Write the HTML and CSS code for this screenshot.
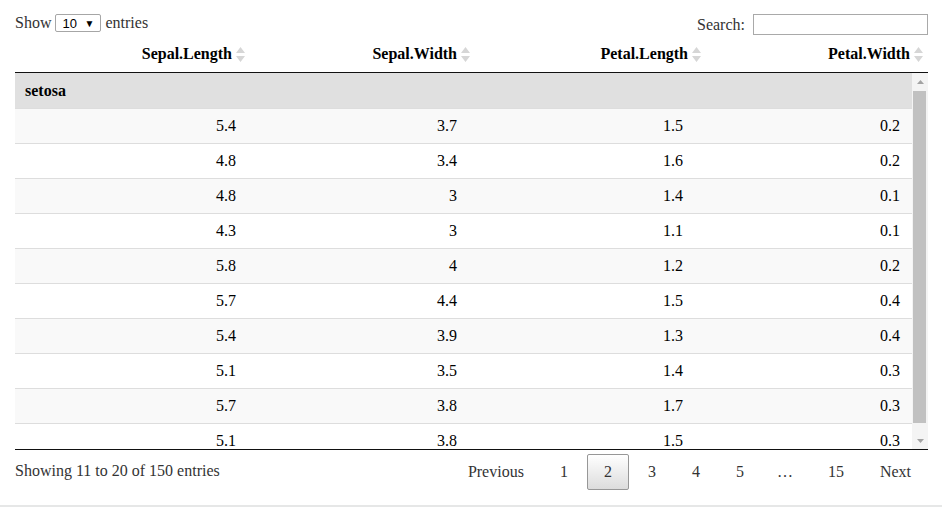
FILE: index.html
```html
<!DOCTYPE html>
<html>
<head>
<meta charset="utf-8">
<title>iris table</title>
<link rel="stylesheet" href="styles.css">
</head>
<body>
<div class="page">
  <div class="wrapper">
    <div class="top">
      <div class="length">Show <span class="select"><span class="select-val">10</span><span class="select-arrow">&#9660;</span></span> entries</div>
      <label class="filter">Search:<input class="search-input" type="search"></label>
    </div>
    <div class="scroll-head">
      <table class="head-table">
        <colgroup><col class="hc1"><col class="hc2"><col class="hc3"><col class="hc4"></colgroup>
        <thead>
          <tr>
            <th>Sepal.Length<svg class="sort" viewBox="0 0 9 15" width="9" height="15"><path d="M4.5 0 L9 6 L0 6 Z M0 9 L9 9 L4.5 15 Z"/></svg></th>
            <th>Sepal.Width<svg class="sort" viewBox="0 0 9 15" width="9" height="15"><path d="M4.5 0 L9 6 L0 6 Z M0 9 L9 9 L4.5 15 Z"/></svg></th>
            <th>Petal.Length<svg class="sort" viewBox="0 0 9 15" width="9" height="15"><path d="M4.5 0 L9 6 L0 6 Z M0 9 L9 9 L4.5 15 Z"/></svg></th>
            <th>Petal.Width<svg class="sort" viewBox="0 0 9 15" width="9" height="15"><path d="M4.5 0 L9 6 L0 6 Z M0 9 L9 9 L4.5 15 Z"/></svg></th>
          </tr>
        </thead>
      </table>
    </div>
    <div class="scroll-body">
      <div class="body-clip">
        <table class="body-table">
          <colgroup><col class="bc1"><col class="bc2"><col class="bc3"><col class="bc4"></colgroup>
          <tbody>
            <tr class="group"><td colspan="4">setosa</td></tr>
            <tr class="odd"><td>5.4</td><td>3.7</td><td>1.5</td><td>0.2</td></tr>
            <tr class="even"><td>4.8</td><td>3.4</td><td>1.6</td><td>0.2</td></tr>
            <tr class="odd"><td>4.8</td><td>3</td><td>1.4</td><td>0.1</td></tr>
            <tr class="even"><td>4.3</td><td>3</td><td>1.1</td><td>0.1</td></tr>
            <tr class="odd"><td>5.8</td><td>4</td><td>1.2</td><td>0.2</td></tr>
            <tr class="even"><td>5.7</td><td>4.4</td><td>1.5</td><td>0.4</td></tr>
            <tr class="odd"><td>5.4</td><td>3.9</td><td>1.3</td><td>0.4</td></tr>
            <tr class="even"><td>5.1</td><td>3.5</td><td>1.4</td><td>0.3</td></tr>
            <tr class="odd"><td>5.7</td><td>3.8</td><td>1.7</td><td>0.3</td></tr>
            <tr class="even"><td>5.1</td><td>3.8</td><td>1.5</td><td>0.3</td></tr>
          </tbody>
        </table>
      </div>
      <div class="scrollbar">
        <div class="sb-btn"><svg width="7" height="4" viewBox="0 0 7 4"><path d="M3.5 0 L7 4 L0 4 Z"/></svg></div>
        <div class="sb-track"><div class="sb-thumb"></div></div>
        <div class="sb-btn"><svg width="7" height="4" viewBox="0 0 7 4"><path d="M0 0 L7 0 L3.5 4 Z"/></svg></div>
      </div>
    </div>
    <div class="footer">
      <div class="info">Showing 11 to 20 of 150 entries</div>
      <div class="paginate"><a class="pbtn">Previous</a><a class="pbtn">1</a><a class="pbtn current">2</a><a class="pbtn">3</a><a class="pbtn">4</a><a class="pbtn">5</a><span class="ellipsis">&hellip;</span><a class="pbtn">15</a><a class="pbtn">Next</a></div>
    </div>
  </div>
</div>
</body>
</html>
```

FILE: styles.css
```css
html, body {
  margin: 0;
  padding: 0;
  background: #ffffff;
}

body {
  font-family: "Liberation Serif", "Times New Roman", serif;
  font-size: 16px;
  color: #000;
}

.page {
  height: 505px;
  border-bottom: 2px solid #e6e7e7;
}

.wrapper {
  padding: 0 14px 0 15px;
}

/* top controls */
.top {
  display: flex;
  justify-content: space-between;
  align-items: flex-start;
  height: 21px;
  padding-top: 14px;
  color: #333;
}

.length {
  display: flex;
  align-items: center;
  height: 18px;
  white-space: pre;
}

.select {
  display: inline-flex;
  align-items: center;
  justify-content: space-between;
  box-sizing: border-box;
  width: 46px;
  height: 18px;
  padding: 0 6px 0 6px;
  border: 1px solid #a6a6a6;
  border-radius: 2px;
  font-family: "Liberation Sans", Arial, sans-serif;
  font-size: 13px;
  color: #000;
  background: #fff;
}

.select-arrow {
  font-size: 10px;
  color: #000;
}

.filter {
  display: flex;
  align-items: center;
  height: 21px;
}

.search-input {
  box-sizing: border-box;
  width: 175px;
  height: 21px;
  margin: 0 0 0 8px;
  padding: 0 2px;
  border: 1px solid #a9a9a9;
  border-radius: 0;
  background: #fff;
  outline: none;
}

/* header */
.head-table,
.body-table {
  border-collapse: collapse;
  border-spacing: 0;
  table-layout: fixed;
}

.head-table {
  width: 913px;
}

.hc1 { width: 235px; }
.hc2 { width: 225px; }
.hc3 { width: 231px; }
.hc4 { width: 222px; }

.head-table th {
  padding: 10px 5px 9px 10px;
  line-height: 18px;
  text-align: right;
  font-weight: bold;
  color: #000;
  border-bottom: 1px solid #111;
  white-space: nowrap;
}

.sort {
  display: inline-block;
  margin-left: 4px;
  vertical-align: -3px;
  fill: #d6d6d6;
}

/* body */
.scroll-body {
  display: flex;
  height: 376px;
  border-bottom: 1px solid #111;
}

.body-clip {
  width: 897px;
  overflow: hidden;
}

.body-table {
  width: 897px;
}

.bc1 { width: 231px; }
.bc2 { width: 221px; }
.bc3 { width: 226px; }
.bc4 { width: 219px; }

.body-table td {
  padding: 8px 10px;
  line-height: 18px;
  text-align: right;
  border-top: 1px solid #ddd;
}

.body-table td:nth-child(4) {
  padding-right: 12px;
}

.body-table tr.group td {
  border-top: none;
  padding: 9px 10px 8px;
  text-align: left;
  font-weight: bold;
  background: #e0e0e0;
}

.body-table tr.odd td {
  background: #f9f9f9;
}

.body-table tr.even td {
  background: #fff;
}

/* fake scrollbar */
.scrollbar {
  width: 16px;
  display: flex;
  flex-direction: column;
  background: #f4f4f4;
}

.sb-btn {
  height: 17px;
  display: flex;
  align-items: center;
  justify-content: center;
  fill: #a3a3a3;
}

.sb-track {
  flex: 1;
  padding: 1px 2px 0 1px;
}

.sb-thumb {
  height: 332px;
  background: #c1c1c1;
}

/* footer */
.footer {
  display: flex;
  justify-content: space-between;
  align-items: flex-start;
  color: #333;
}

.info {
  padding-top: 12px;
  line-height: 18px;
}

.paginate {
  display: flex;
  align-items: flex-start;
  padding-top: 4px;
  white-space: nowrap;
}

.pbtn {
  box-sizing: border-box;
  display: inline-block;
  min-width: 24px;
  padding: 8px 16px;
  margin-left: 2px;
  line-height: 18px;
  text-align: center;
  color: #333;
  border: 1px solid transparent;
  border-radius: 2px;
  cursor: pointer;
}

.pbtn.current {
  border: 1px solid #979797;
  background: linear-gradient(to bottom, #ffffff 0%, #dcdcdc 100%);
}

.ellipsis {
  display: inline-block;
  padding: 9px 16px;
  line-height: 18px;
  color: #333;
}
```
